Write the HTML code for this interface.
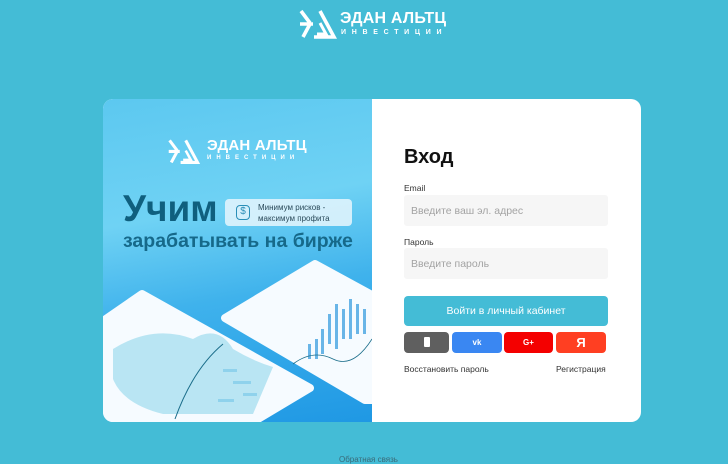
<!DOCTYPE html>
<html><head><meta charset="utf-8"><style>
*{margin:0;padding:0;box-sizing:border-box}
body{width:728px;height:463px;background:#44bcd6;font-family:"Liberation Sans","DejaVu Sans",sans-serif;position:relative;overflow:hidden}
.abs{position:absolute}
.logo-t{color:#fff;font-weight:bold;font-size:16px;letter-spacing:0.2px;white-space:nowrap}
.logo-s{color:#fff;font-weight:bold;font-size:7px;letter-spacing:5.7px;white-space:nowrap}
.card{left:103px;top:99px;width:538px;height:323px;border-radius:10px;overflow:hidden;background:#fff}
.left{left:0;top:0;width:269px;height:323px;background:linear-gradient(170deg,#5cc8f0 0%,#6fd2f4 35%,#3fb2ec 60%,#1f98e4 100%)}
.inp{left:301px;width:204px;height:31px;background:#f6f6f6;border-radius:3px;color:#a3a3a3;font-size:10.5px;padding:10px 7px}
.lbl{left:301px;font-size:8.5px;color:#333}
.sb{top:233px;height:21px;border-radius:4px;color:#fff;font-size:10px;font-weight:bold;text-align:center;line-height:21px}
</style></head><body>
<svg class="abs" style="left:298px;top:7px" width="40" height="33" viewBox="0 0 40 33" fill="none" stroke="#fff" stroke-width="3.6" stroke-linejoin="miter">
<path d="M22 4 L36 30 H16"/><path d="M22 16 L28 27 H19" stroke-width="3"/>
<path d="M3 4 L12 16 M2 17 H15 M12 17 L5 30"/>
</svg>
<div class="abs logo-t" style="left:340px;top:10px">ЭДАН АЛЬТЦ</div>
<div class="abs logo-s" style="left:341px;top:29px">ИНВЕСТИЦИИ</div>

<div class="abs card">
 <div class="abs left">
  <svg class="abs" style="left:64px;top:38px" width="34" height="28" viewBox="0 0 40 33" fill="none" stroke="#fff" stroke-width="3.6">
   <path d="M22 4 L36 30 H16"/><path d="M22 16 L28 27 H19" stroke-width="3"/>
   <path d="M3 4 L12 16 M2 17 H15 M12 17 L5 30"/>
  </svg>
  <div class="abs logo-t" style="left:104px;top:38px;font-size:15px">ЭДАН АЛЬТЦ</div>
  <div class="abs logo-s" style="left:104px;top:56px;font-size:6px;letter-spacing:5px">ИНВЕСТИЦИИ</div>
  <div class="abs" style="left:20px;top:89px;font-size:37px;font-weight:bold;color:#0f5f7e">Учим</div>
  <div class="abs" style="left:122px;top:100px;width:127px;height:27px;background:rgba(230,246,253,.85);border-radius:4px"></div>
  <div class="abs" style="left:133px;top:106px;width:14px;height:15px;border:1.5px solid #2a8fb8;border-radius:4px;color:#2a8fb8;font-size:10px;text-align:center;line-height:12px">$</div>
  <div class="abs" style="left:155px;top:103px;font-size:8px;color:#2a4a5a;line-height:11px">Минимум рисков -<br>максимум профита</div>
  <div class="abs" style="left:20px;top:131px;font-size:19.5px;font-weight:bold;color:#16698a">зарабатывать на бирже</div>
  <svg class="abs" style="left:0;top:0" width="269" height="323" viewBox="0 0 269 323">
   <polygon points="0,222 39,195 207,289 150,323 0,323" fill="#f6fbff" stroke="#f6fbff" stroke-width="8" stroke-linejoin="round"/>
   <path d="M10 250 Q50 225 90 240 Q115 225 130 250 Q150 262 170 268 L150 315 L60 315 Q20 305 10 280 Z" fill="#9fdcee" opacity=".7"/>
   <path d="M120 245 Q90 270 72 320" stroke="#1a6d8a" stroke-width="1" fill="none"/>
   <g fill="#8fd2ec"><rect x="120" y="270" width="14" height="3"/><rect x="130" y="282" width="18" height="3"/><rect x="140" y="294" width="14" height="3"/><rect x="115" y="300" width="16" height="3"/></g>
   <polygon points="122,219 212,165 269,196 269,301 262,301" fill="#f6fbff" stroke="#f6fbff" stroke-width="8" stroke-linejoin="round"/>
   <g fill="#3a9ee0" opacity=".75"><rect x="225" y="215" width="3" height="30"/><rect x="232" y="205" width="3" height="45"/><rect x="239" y="210" width="3" height="30"/><rect x="246" y="200" width="3" height="40"/><rect x="253" y="205" width="3" height="30"/><rect x="260" y="210" width="3" height="25"/><rect x="212" y="240" width="3" height="20"/><rect x="205" y="245" width="3" height="15"/><rect x="218" y="230" width="3" height="25"/></g>
   <path d="M190 265 Q210 250 230 260 T269 240" stroke="#1a6d8a" stroke-width=".8" fill="none"/>
  </svg>
 </div>
 <div class="abs" style="left:301px;top:47px;font-size:20px;font-weight:bold;color:#111">Вход</div>
 <div class="lbl abs" style="top:84px">Email</div>
 <div class="inp abs" style="top:96px">Введите ваш эл. адрес</div>
 <div class="lbl abs" style="top:138px">Пароль</div>
 <div class="inp abs" style="top:149px">Введите пароль</div>
 <div class="abs" style="left:301px;top:197px;width:204px;height:30px;background:#44bcd6;border-radius:4px;color:#fff;font-size:10.5px;text-align:center;line-height:30px">Войти в личный кабинет</div>
 <div class="abs sb" style="left:301px;width:45px;background:#5f5f5f"><span style="display:inline-block;width:6px;height:10px;background:#fff;border-radius:1px;vertical-align:middle"></span></div>
 <div class="abs sb" style="left:349px;width:50px;background:#3a87f2;font-size:8px">vk</div>
 <div class="abs sb" style="left:401px;width:49px;background:#f40000;font-size:8px">G+</div>
 <div class="abs sb" style="left:453px;width:50px;background:#ff3f22;font-size:13px">Я</div>
 <div class="abs" style="left:301px;top:265px;font-size:8.5px;color:#333">Восстановить пароль</div>
 <div class="abs" style="left:453px;top:265px;font-size:8.5px;color:#333">Регистрация</div>
</div>
<div class="abs" style="left:339px;top:455px;font-size:8px;color:#3a6a78">Обратная связь</div>
</body></html>
